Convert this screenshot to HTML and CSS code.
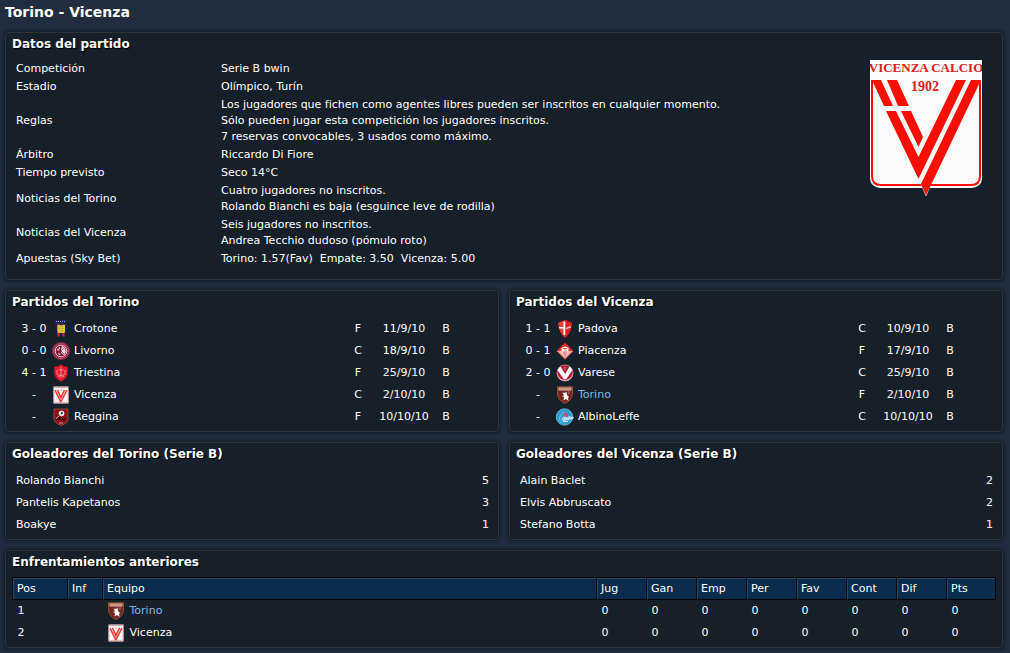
FILE: index.html
```html
<!DOCTYPE html>
<html lang="es">
<head>
<meta charset="utf-8">
<title>Torino - Vicenza</title>
<link rel="stylesheet" href="styles.css">
</head>
<body>
<svg class="sprite" aria-hidden="true">
  <symbol id="crotone" viewBox="0 0 18 18">
    <path d="M1.500 0h15L14.500 3v6l-2 7.500h-7l-2-7.500V3z" fill="#22225a"/>
    <path d="M4 1.500h10" stroke="#a5a5b4" stroke-dasharray="1 1"/>
    <path d="M5.500 4h2v12.500h-2zM10.500 4h2v12.500h-2z" fill="#e3202c"/>
    <path d="M5.500 5h7.500v7l-1 1H6.500l-1-1z" fill="#d8c93c"/>
    <path d="M8 6h3M7 8.500h1.500M10 8.500h1.500M8.500 11h2" stroke="#a89a2a"/>
    <path d="M8 13h2v3.500H8z" fill="#1b2040"/>
  </symbol>
  <symbol id="livorno" viewBox="0 0 18 18">
    <circle cx="9" cy="9" r="9" fill="#9a2443"/>
    <circle cx="9" cy="9" r="7.500" fill="none" stroke="#c77f90" stroke-dasharray="1 1"/>
    <circle cx="9" cy="9" r="5.800" fill="#7f1738" stroke="#e9cdd5"/>
    <path d="M10 4c4 2 5 6 2 9-2-1-4-3-3-5zM5 7l3-2v2l-2 2zM6 11l3 1-2 1z" fill="#f0dde2"/>
    <path d="M6 6l6 6M7 11l5-5" stroke="#7f1738" stroke-width=".7"/>
  </symbol>
  <symbol id="triestina" viewBox="0 0 18 18">
    <path d="M2.500 3Q6 3 9 .5q3 2.500 6.500 2.500V9q0 5-6.500 8.500Q2.500 14 2.500 9z" fill="#e3182a" stroke="#b81424" stroke-width=".6"/>
    <path d="M9 3v11M5 6v3.500q0 2 4 2t4-2V6M6.500 6h5M6 13l3-2 3 2" fill="none" stroke="#f58b92" stroke-width="1"/>
  </symbol>
  <symbol id="vicenza" viewBox="0 0 18 18">
    <path d="M1.500 .5h15v17h-15z" fill="#fffafa"/>
    <path d="M2 1.500h14M8 4h2" stroke="#f0a5a3"/>
    <path d="M3 4l5.800 12L15 4M5.500 4l3.400 7.500L12.500 4" fill="none" stroke="#ec3a36" stroke-width="1.600"/>
    <path d="M2 4v12.500h14V4" fill="none" stroke="#f2a5a3" stroke-width=".8"/>
  </symbol>
  <symbol id="reggina" viewBox="0 0 18 18">
    <path d="M2 1h14v10q0 4-7 6.500Q2 15 2 11z" fill="#8c1018" stroke="#b65a58" stroke-width=".7"/>
    <path d="M3 12l4-4 3 2 4 1-2 2-2-2-4 1z" fill="#3a0c12"/>
    <circle cx="9.500" cy="5.500" r="2.800" fill="#eef3f1"/>
    <path d="M9 4.500h1.500v1.500H9zM7.500 6.500l1 1" fill="#27323a" stroke="#27323a" stroke-width=".6"/>
    <path d="M4 11l3-3M7 15h4" stroke="#d9999b"/>
  </symbol>
  <symbol id="padova" viewBox="0 0 18 18">
    <path d="M2 2.500L9 0l7 2.500Q16 12.500 9 18 2 12.500 2 2.500z" fill="#d3261f"/>
    <path d="M3 3l6-2.500V17Q3 11 3 3z" fill="#e0453e"/>
    <path d="M7.500 1.500h1.800v13.500H7.500zM3 7h6.500v1.500H3.300z" fill="#fff"/>
    <path d="M10.500 9q1-2 4.500-2" stroke="#f5b5ac" fill="none" stroke-width="1.400"/>
  </symbol>
  <symbol id="piacenza" viewBox="0 0 18 18">
    <path d="M9 .5L17.500 9 9 17.500.5 9z" fill="#e22c28"/>
    <path d="M1 9h16l-8 8z" fill="#f0a09a"/>
    <path d="M5.500 9V6Q9 3 12.500 6v3z" fill="#fff"/>
    <path d="M7 6.500h4M8 8h3" stroke="#e46a64"/>
    <path d="M4 9.500h10L9 15z" fill="#f7cfca"/>
    <path d="M7 11h4M8 13h2" stroke="#dc5049"/>
  </symbol>
  <symbol id="varese" viewBox="0 0 18 18">
    <circle cx="9" cy="9" r="8" fill="#fff" stroke="#d8a4ad" stroke-width=".8"/>
    <path d="M4.500 2.500Q9 0 13.500 2.500L9.200 10z" fill="#bd1733"/>
    <path d="M1.500 6q-1 6 3.500 9l4 1.500 4-1.500q4.500-3 3.500-9L10 15.500H8z" fill="#bd1733"/>
    <path d="M7.500 3h3l-1 3H8.500z" fill="#a25f68"/>
  </symbol>
  <symbol id="torino" viewBox="0 0 18 18">
    <path d="M1.500.8h15V7q0 7-7.500 10.500Q1.500 14 1.500 7z" fill="#762523" stroke="#97502b"/>
    <path d="M2.500 1.500h13v3h-13z" fill="#d8b4a4"/>
    <path d="M3.500 3h11" stroke="#a25a4c" stroke-dasharray="1 1"/>
    <path d="M6.500 6.500l2.500 .5 1.500-1.500 .5 3.500 2 2-1 1 .5 3-2.500-2-2.500 1.500 .5-3.500-2-1 2-.5z" fill="#fff"/>
    <path d="M12 6h2M12 7.500h1.500" stroke="#c47e62" stroke-width=".8"/>
  </symbol>
  <symbol id="albinoleffe" viewBox="0 0 18 18">
    <circle cx="8.500" cy="9" r="8.200" fill="#309bd2" stroke="#76c3e9" stroke-width=".8"/>
    <path d="M3 13Q4 5 9 4M5 15q0-5 3-7" fill="none" stroke="#67bfe8"/>
    <path d="M6 10.500l4-2.500 8 1-1 2-5 1-5 1z" fill="#b5e1f3"/>
    <path d="M8 4.500l4 1v4l-3.500-1z" fill="#d84969"/>
    <path d="M7 13.500h5" stroke="#d5f0fa"/>
  </symbol>
</svg>

<main class="page">
  <h1 class="page-title">Torino - Vicenza</h1>

  <section class="panel panel-match">
    <h2 class="panel-title">Datos del partido</h2>
    <div class="match">
      <table class="facts">
        <tr><th scope="row">Competición</th><td>Serie B bwin</td></tr>
        <tr><th scope="row">Estadio</th><td>Olímpico, Turín</td></tr>
        <tr><th scope="row">Reglas</th><td>Los jugadores que fichen como agentes libres pueden ser inscritos en cualquier momento.<br>Sólo pueden jugar esta competición los jugadores inscritos.<br>7 reservas convocables, 3 usados como máximo.</td></tr>
        <tr><th scope="row">Árbitro</th><td>Riccardo Di Fiore</td></tr>
        <tr><th scope="row">Tiempo previsto</th><td>Seco 14°C</td></tr>
        <tr><th scope="row">Noticias del Torino</th><td>Cuatro jugadores no inscritos.<br>Rolando Bianchi es baja (esguince leve de rodilla)</td></tr>
        <tr><th scope="row">Noticias del Vicenza</th><td>Seis jugadores no inscritos.<br>Andrea Tecchio dudoso (pómulo roto)</td></tr>
        <tr><th scope="row">Apuestas (Sky Bet)</th><td>Torino: 1.57(Fav)&nbsp; Empate: 3.50&nbsp; Vicenza: 5.00</td></tr>
      </table>
      <svg class="badge" viewBox="0 0 112 138" role="img" aria-label="Vicenza Calcio 1902">
        <path d="M0 0h112v119q-1 8-10 9H10q-9-1-10-9z" fill="#fbfbfb"/>
        <path d="M2 20v96q0 9 9 9h90q9 0 9-9V20" fill="none" stroke="#fd0d00" stroke-width="2"/>
        <path d="M51 124h10l-5 12z" fill="#fd0d00" stroke="#b8bcc0" stroke-width=".8"/>
        <path d="M2 20h9l12 26H14zM17 20h10l12 26H28zM16 51h10l22.500 46L86 20h10L48.500 119zM31 51h10l12 26-4.500 10zM101 20h10L60 127l-4 7-5-10z" fill="#fd0d00"/>
        <text class="badge-text" x="56" y="12" text-anchor="middle">VICENZA CALCIO</text>
        <text class="badge-text badge-year" x="55" y="31" text-anchor="middle">1902</text>
      </svg>
    </div>
  </section>

  <div class="columns">
    <section class="panel">
      <h2 class="panel-title">Partidos del Torino</h2>
      <table class="fixtures">
        <colgroup><col class="c-score"><col class="c-crest"><col><col class="c-venue"><col class="c-date"><col class="c-comp"></colgroup>
        <tr><td class="score">3 - 0</td><td><svg class="crest"><use href="#crotone"/></svg></td><td class="team">Crotone</td><td>F</td><td>11/9/10</td><td>B</td></tr>
        <tr><td class="score">0 - 0</td><td><svg class="crest"><use href="#livorno"/></svg></td><td class="team">Livorno</td><td>C</td><td>18/9/10</td><td>B</td></tr>
        <tr><td class="score">4 - 1</td><td><svg class="crest"><use href="#triestina"/></svg></td><td class="team">Triestina</td><td>F</td><td>25/9/10</td><td>B</td></tr>
        <tr><td class="score">-</td><td><svg class="crest"><use href="#vicenza"/></svg></td><td class="team">Vicenza</td><td>C</td><td>2/10/10</td><td>B</td></tr>
        <tr><td class="score">-</td><td><svg class="crest"><use href="#reggina"/></svg></td><td class="team">Reggina</td><td>F</td><td>10/10/10</td><td>B</td></tr>
      </table>
    </section>
    <section class="panel">
      <h2 class="panel-title">Partidos del Vicenza</h2>
      <table class="fixtures">
        <colgroup><col class="c-score"><col class="c-crest"><col><col class="c-venue"><col class="c-date"><col class="c-comp"></colgroup>
        <tr><td class="score">1 - 1</td><td><svg class="crest"><use href="#padova"/></svg></td><td class="team">Padova</td><td>C</td><td>10/9/10</td><td>B</td></tr>
        <tr><td class="score">0 - 1</td><td><svg class="crest"><use href="#piacenza"/></svg></td><td class="team">Piacenza</td><td>F</td><td>17/9/10</td><td>B</td></tr>
        <tr><td class="score">2 - 0</td><td><svg class="crest"><use href="#varese"/></svg></td><td class="team">Varese</td><td>C</td><td>25/9/10</td><td>B</td></tr>
        <tr><td class="score">-</td><td><svg class="crest"><use href="#torino"/></svg></td><td class="team own">Torino</td><td>F</td><td>2/10/10</td><td>B</td></tr>
        <tr><td class="score">-</td><td><svg class="crest"><use href="#albinoleffe"/></svg></td><td class="team">AlbinoLeffe</td><td>C</td><td>10/10/10</td><td>B</td></tr>
      </table>
    </section>
    <section class="panel">
      <h2 class="panel-title">Goleadores del Torino (Serie B)</h2>
      <table class="scorers">
        <tr><td>Rolando Bianchi</td><td class="goals">5</td></tr>
        <tr><td>Pantelis Kapetanos</td><td class="goals">3</td></tr>
        <tr><td>Boakye</td><td class="goals">1</td></tr>
      </table>
    </section>
    <section class="panel">
      <h2 class="panel-title">Goleadores del Vicenza (Serie B)</h2>
      <table class="scorers">
        <tr><td>Alain Baclet</td><td class="goals">2</td></tr>
        <tr><td>Elvis Abbruscato</td><td class="goals">2</td></tr>
        <tr><td>Stefano Botta</td><td class="goals">1</td></tr>
      </table>
    </section>
  </div>

  <section class="panel panel-history">
    <h2 class="panel-title">Enfrentamientos anteriores</h2>
    <table class="standings">
      <colgroup><col class="c-pos"><col class="c-inf"><col><col class="c-num" span="7"><col class="c-pts"></colgroup>
      <thead>
        <tr><th>Pos</th><th>Inf</th><th>Equipo</th><th>Jug</th><th>Gan</th><th>Emp</th><th>Per</th><th>Fav</th><th>Cont</th><th>Dif</th><th>Pts</th></tr>
      </thead>
      <tbody>
        <tr><td>1</td><td></td><td class="club-cell"><span class="club own"><svg class="crest"><use href="#torino"/></svg>Torino</span></td><td>0</td><td>0</td><td>0</td><td>0</td><td>0</td><td>0</td><td>0</td><td>0</td></tr>
        <tr><td>2</td><td></td><td class="club-cell"><span class="club"><svg class="crest"><use href="#vicenza"/></svg>Vicenza</span></td><td>0</td><td>0</td><td>0</td><td>0</td><td>0</td><td>0</td><td>0</td><td>0</td></tr>
      </tbody>
    </table>
  </section>
</main>
</body>
</html>
```
FILE: styles.css
```css
* { box-sizing: border-box; }

body {
  margin: 0;
  background: #1f2d3e;
  color: #fff;
  font: 11px/16px "DejaVu Sans", sans-serif;
}

.sprite { display: none; }

.page {
  display: flex;
  flex-direction: column;
  gap: 10px;
  padding: 0 7px 5px 5px;
}

.page-title {
  margin: 0 0 -2px;
  padding-top: 2px;
  height: 24px;
  font-size: 14px;
  line-height: 20px;
}

.panel {
  padding: 2px 6px 3px;
  background: #15202b;
  border: 1px solid #2c3538;
  border-radius: 3px;
  box-shadow: 0 0 3px 1px #111c28;
}

.panel-match { padding-bottom: 11px; }

.panel-title {
  margin: 0;
  padding-bottom: 7px;
  font-size: 12px;
  line-height: 18px;
  text-shadow: 1px 1px 1px #000;
}

.panel-history .panel-title { padding-bottom: 6px; }

table { border-collapse: collapse; }

td, th {
  padding: 0;
  font-weight: normal;
  text-align: left;
}

.match {
  display: flex;
  justify-content: space-between;
  align-items: flex-start;
  padding: 0 14px 0 4px;
}

.facts th { width: 205px; }
.facts th, .facts td { padding: 1px 0; }

.badge { width: 112px; height: 138px; }

.badge-text {
  fill: #d8201c;
  font: bold 13px "Liberation Serif", serif;
}

.badge-year { font-size: 14px; }

.columns {
  display: grid;
  grid-template-columns: 1fr 1fr;
  gap: 10px;
}

.fixtures, .standings {
  width: 100%;
  table-layout: fixed;
}

.fixtures { width: calc(100% - 40px); }
.fixtures td { height: 22px; text-align: center; }
.fixtures .score { padding-left: 4px; }
.fixtures .team { padding-left: 4px; text-align: left; }

.c-score { width: 40px; }
.c-crest { width: 18px; }
.c-venue { width: 20px; }
.c-date { width: 72px; }
.c-comp { width: 12px; }

.crest {
  display: block;
  width: 18px;
  height: 18px;
}

.own { color: #83b8e8; }

.scorers { width: 100%; }
.scorers td { height: 22px; padding: 0 4px; }
.scorers .goals { padding-right: 3px; text-align: right; }

.c-pos { width: 55px; }
.c-inf { width: 35px; }
.c-num { width: 50px; }
.c-pts { width: 49px; }

.standings td, .standings th { height: 22px; padding-left: 5px; }
.standings .club-cell { padding-left: 4px; }

.standings th {
  background: #0a2c4d;
  border: 1px solid #02060b;
  box-shadow: inset 1px 1px #2c4a64;
  padding-left: 4px;
}

.club {
  display: flex;
  align-items: center;
  gap: 5px;
}
```
